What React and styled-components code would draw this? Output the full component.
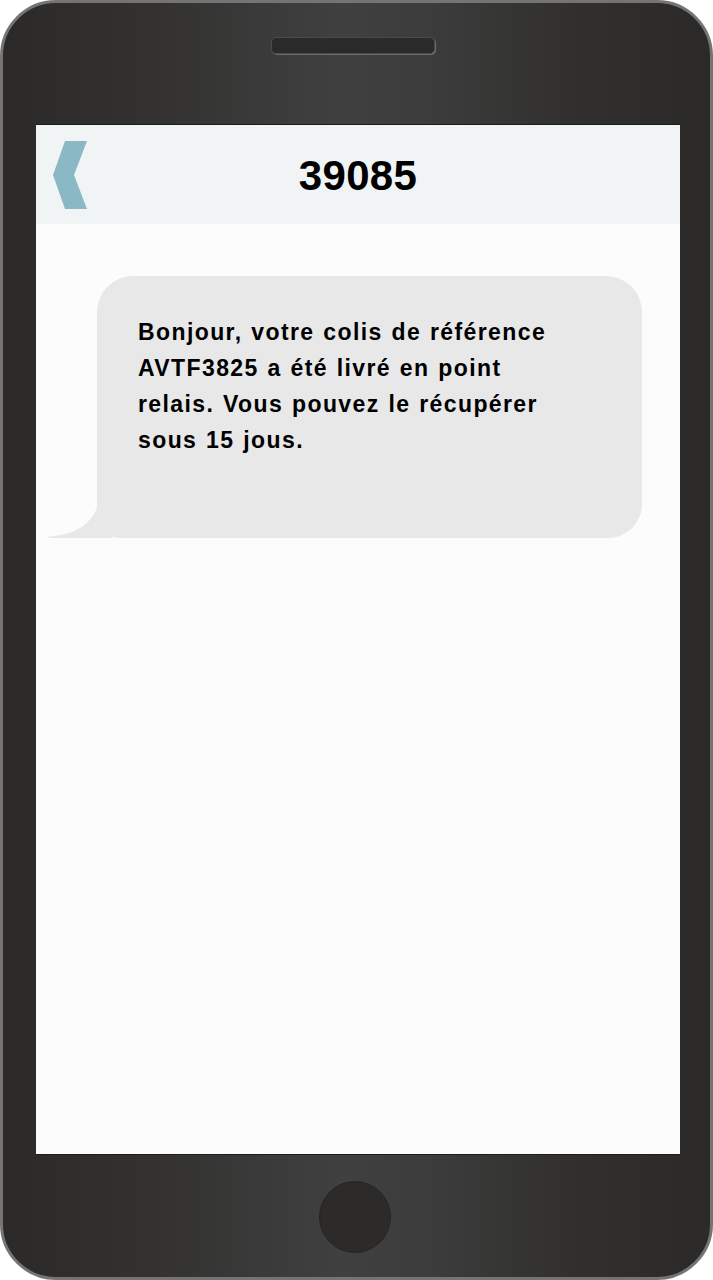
import React from 'react'
import styled, { createGlobalStyle } from 'styled-components'

const Global = createGlobalStyle`
  html, body {
    margin: 0;
    padding: 0;
    background: #ffffff;
  }
`

const Phone = styled.div`
  box-sizing: border-box;
  width: 713px;
  height: 1280px;
  border: 3px solid #747474;
  border-radius: 56px;
  background: linear-gradient(
    to right,
    #2b2a28 0%,
    #333231 22%,
    #404040 48%,
    #3c3c3c 60%,
    #302f2d 82%,
    #2b2a28 100%
  );
  display: flex;
  flex-direction: column;
  align-items: center;
`

const Speaker = styled.div`
  box-sizing: border-box;
  width: 164px;
  height: 17px;
  margin-top: 34px;
  margin-left: -8px;
  border-radius: 5px;
  background: #2b2a28;
  border: 1px solid #4a4a4a;
  box-shadow: 1px 1px 0 #6c6c6c;
`

const Screen = styled.div`
  box-sizing: border-box;
  align-self: stretch;
  margin: 70px 30px 0 33px;
  height: 1031px;
  background: #fcfcfc;
  border-top: 1px solid #1c1c1c;
  border-bottom: 1px solid #1c1c1c;
  display: flex;
  flex-direction: column;
`

const Header = styled.div`
  height: 99px;
  background: #f0f4f5;
  display: grid;
  grid-template-columns: 1fr auto 1fr;
  align-items: center;
`

const Back = styled.svg`
  justify-self: start;
  margin-left: 17px;
  margin-top: 1px;
`

const Title = styled.h1`
  margin: 0;
  margin-top: 2px;
  font-family: "Comic Sans MS", "Liberation Sans", Arial, sans-serif;
  font-weight: 700;
  font-size: 42px;
  color: #000;
  letter-spacing: 0.3px;
`

const Thread = styled.div`
  padding: 52px 38px 0 61px;
`

const Bubble = styled.div`
  position: relative;
  box-sizing: border-box;
  height: 262px;
  background: #e8e8e8;
  border-radius: 36px 36px 34px 22px;
  padding: 38px 20px 0 41px;
`

const Tail = styled.svg`
  position: absolute;
  left: -51px;
  bottom: 0;
`

const Text = styled.p`
  margin: 0;
  font-family: "Comic Sans MS", "Liberation Sans", Arial, sans-serif;
  font-weight: 700;
  font-size: 23px;
  line-height: 36px;
  color: #000;
  letter-spacing: 1.4px;
  word-spacing: 1px;
`

const HomeButton = styled.div`
  box-sizing: border-box;
  width: 72px;
  height: 72px;
  margin-top: 26px;
  margin-left: -3px;
  border-radius: 50%;
  background: #2c2b29;
  border: 1px solid #252422;
`

export default function App() {
  return (
    <>
      <Global />
      <Phone>
        <Speaker />
        <Screen>
          <Header>
            <Back width="34" height="68" viewBox="0 0 34 68">
              <polygon points="12,0 34,0 21,34 34,68 12,68 0,34" fill="#8ab8c4" />
            </Back>
            <Title>39085</Title>
            <span />
          </Header>
          <Thread>
            <Bubble>
              <Tail width="66" height="36" viewBox="0 0 66 36">
                <path d="M0 35 Q40 33 51 6 L51 0 L66 0 L66 36 L4 36 Z" fill="#e8e8e8" />
              </Tail>
              <Text>
                Bonjour, votre colis de référence
                <br />
                AVTF3825 a été livré en point
                <br />
                relais. Vous pouvez le récupérer
                <br />
                sous 15 jous.
              </Text>
            </Bubble>
          </Thread>
        </Screen>
        <HomeButton />
      </Phone>
    </>
  )
}
